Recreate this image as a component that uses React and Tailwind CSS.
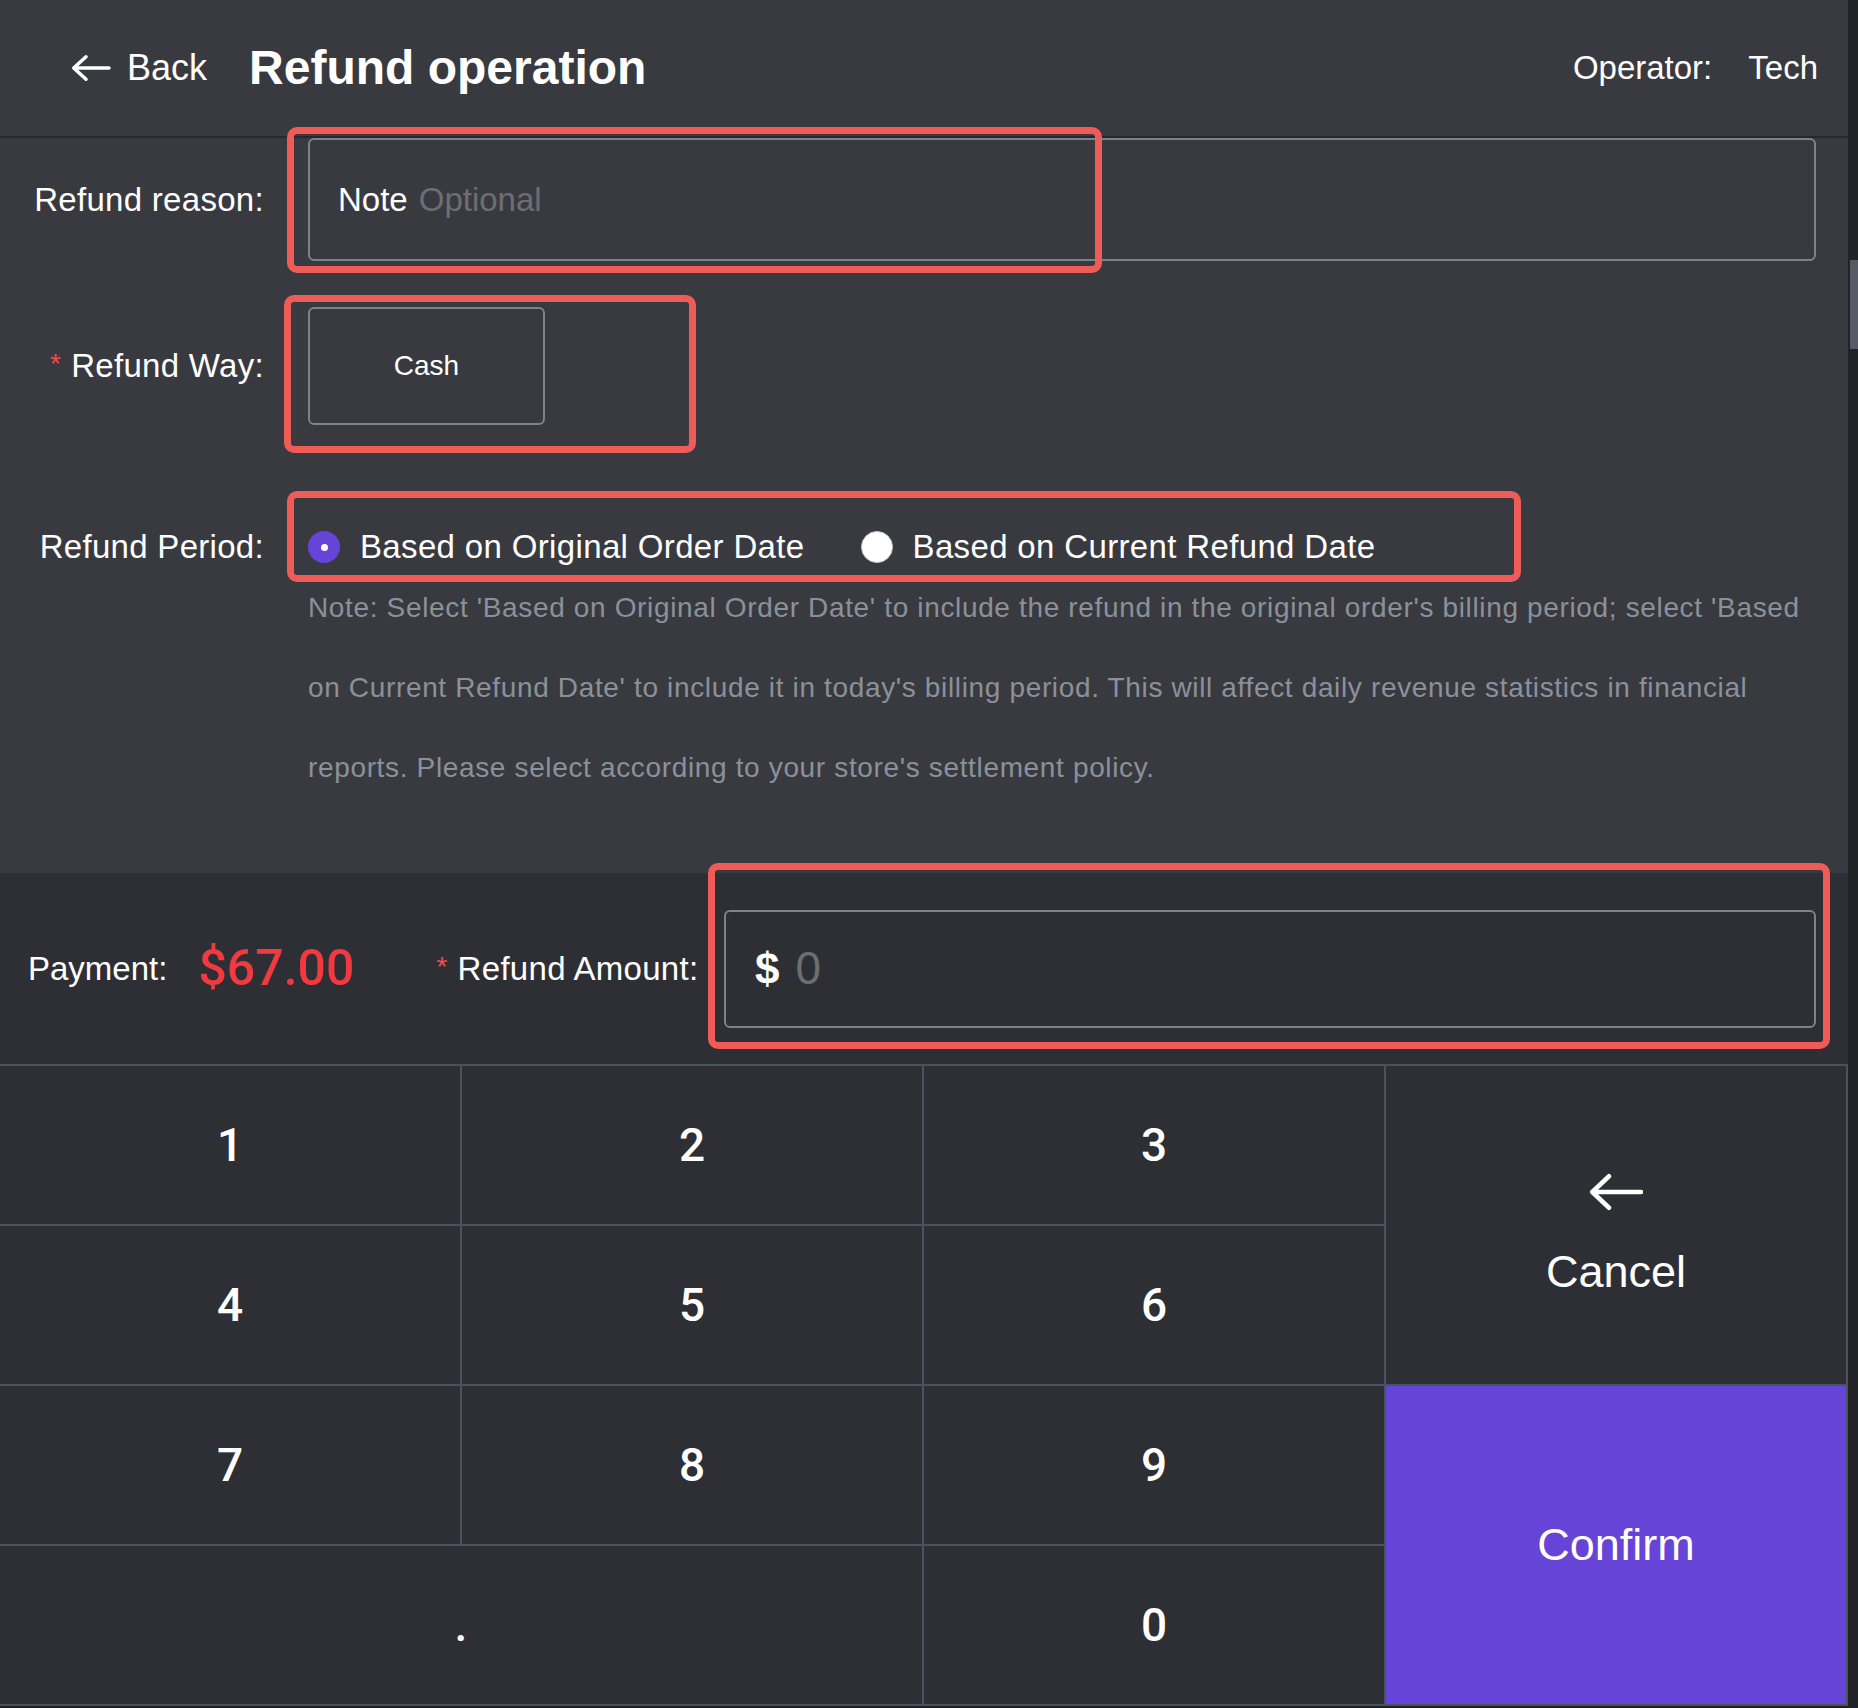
import React from "react";

// Left arrow used by the back link and the cancel key
function ArrowLeft({ w, h, stroke }) {
  return (
    <svg width={w} height={h} viewBox={`0 0 ${w} ${h}`} fill="none">
      <path
        d={`M${w - 2} ${h / 2} H${stroke} M${h / 2 + 1} ${stroke / 2 + 1} L${stroke / 2 + 1} ${h / 2} L${h / 2 + 1} ${h - stroke / 2 - 1}`}
        stroke="white"
        strokeWidth={stroke}
        strokeLinecap="round"
        strokeLinejoin="round"
      />
    </svg>
  );
}

// Highlight frame drawn over a field
function Mark({ className }) {
  return (
    <div
      className={`pointer-events-none absolute rounded-[10px] border-[7px] border-[#ef5b56] ${className}`}
    />
  );
}

function Key({ children, className = "" }) {
  return (
    <div
      className={`flex items-center justify-center bg-[#2e2f35] text-white text-[46px] font-medium font-['Roboto','Liberation_Sans',sans-serif] ${className}`}
    >
      {children}
    </div>
  );
}

export default function App() {
  return (
    <div className="flex w-[1858px] h-[1708px] bg-[#1f2023] font-['Liberation_Sans',Arial,sans-serif] overflow-hidden">
      <div className="flex w-[1848px] flex-col">
        {/* Header */}
        <header className="flex h-[138px] items-center border-b-2 border-[#27282c] bg-[#393a40] pl-[71px] pr-[30px] text-white">
          <div className="flex items-center gap-[16px]">
            <ArrowLeft w={40} h={28} stroke={3.5} />
            <span className="text-[36px] font-medium">Back</span>
          </div>
          <h1 className="ml-[42px] text-[48px] font-bold leading-none">Refund operation</h1>
          <div className="ml-auto flex items-center text-[33px]">
            <span>Operator:</span>
            <span className="ml-[36px]">Tech</span>
          </div>
        </header>

        {/* Form */}
        <section className="flex flex-col bg-[#393a40] pb-[65px] text-white">
          {/* Refund reason */}
          <div className="flex h-[123px] items-center">
            <div className="w-[264px] text-right text-[33px] tracking-[0.3px]">Refund reason:</div>
            <div className="relative ml-[44px] h-full w-[1508px]">
              <div className="flex h-full items-center rounded-[6px] border-2 border-[#7c838f] pl-[28px] text-[33px]">
                <span>Note</span>
                <span className="ml-[11px] text-[#6d6e74]">Optional</span>
              </div>
              <Mark className="left-[-21px] top-[-11px] w-[815px] h-[146px]" />
            </div>
          </div>

          {/* Refund way */}
          <div className="mt-[46px] flex h-[118px] items-center">
            <div className="w-[264px] text-right text-[33px] tracking-[0.3px]">
              <span className="mr-[10px] align-[4px] text-[28px] text-[#ef4b4b]">*</span>
              Refund Way:
            </div>
            <div className="relative ml-[44px] h-full">
              <div className="flex h-full w-[237px] items-center justify-center rounded-[6px] border-2 border-[#7c838f] text-[28px]">
                Cash
              </div>
              <Mark className="left-[-24px] top-[-12px] w-[412px] h-[158px]" />
            </div>
          </div>

          {/* Refund period */}
          <div className="mt-[101px] flex h-[42px] items-center">
            <div className="w-[264px] text-right text-[33px] tracking-[0.3px]">Refund Period:</div>
            <div className="relative ml-[44px] flex h-full items-center text-[33px] tracking-[0.35px]">
              <span className="flex h-[32px] w-[32px] items-center justify-center rounded-full bg-[#6644d8]">
                <span className="h-[7px] w-[7px] rounded-full bg-white" />
              </span>
              <span className="ml-[20px]">Based on Original Order Date</span>
              <span className="ml-[56px] h-[32px] w-[32px] rounded-full border border-[#c8c8cc] bg-white" />
              <span className="ml-[20px]">Based on Current Refund Date</span>
              <Mark className="left-[-21px] top-[-35px] w-[1234px] h-[91px]" />
            </div>
          </div>

          <p className="ml-[308px] w-[1512px] text-[28px] tracking-[0.65px] leading-[80px] text-[#8b919b]">
            Note: Select 'Based on Original Order Date' to include the refund in the original order's billing period; select 'Based on Current Refund Date' to include it in today's billing period. This will affect daily revenue statistics in financial reports. Please select according to your store's settlement policy.
          </p>
        </section>

        {/* Amount */}
        <section className="flex h-[191px] items-center bg-[#2e2f35] pl-[28px] pr-[32px] text-white">
          <span className="text-[33px]">Payment:</span>
          <span className="ml-[31px] text-[50px] font-medium text-[#f03a40] font-['Roboto','Liberation_Sans',sans-serif]">$67.00</span>
          <span className="ml-[82px] text-[33px] tracking-[0.3px]">
            <span className="mr-[10px] align-[4px] text-[28px] text-[#ef4b4b]">*</span>
            Refund Amount:
          </span>
          <div className="relative ml-auto h-[118px] w-[1092px]">
            <div className="flex h-full items-center rounded-[6px] border-2 border-[#7c838f] pl-[29px]">
              <span className="text-[44px] font-bold">$</span>
              <span className="ml-[16px] text-[46px] text-[#6d6e74]">0</span>
            </div>
            <Mark className="left-[-16px] top-[-47px] w-[1122px] h-[186px]" />
          </div>
        </section>

        {/* Keypad */}
        <div className="grid grid-cols-4 grid-rows-[repeat(4,158px)] gap-[2px] border-y-2 border-r-2 border-[#4a5160] bg-[#4a5160]">
          <Key>1</Key>
          <Key>2</Key>
          <Key>3</Key>
          <div className="row-span-2 flex flex-col items-center justify-center gap-[38px] bg-[#2e2f35] pt-[16px] text-white">
            <ArrowLeft w={54} h={38} stroke={4.5} />
            <span className="text-[45px] leading-none">Cancel</span>
          </div>
          <Key>4</Key>
          <Key>5</Key>
          <Key>6</Key>
          <Key>7</Key>
          <Key>8</Key>
          <Key>9</Key>
          <div className="row-span-2 flex items-center justify-center bg-[#6644d8] text-[45px] text-white">
            Confirm
          </div>
          <Key className="col-span-2">.</Key>
          <Key>0</Key>
        </div>
      </div>

      {/* Scroll track */}
      <div className="flex w-[10px] flex-col bg-[#222327] pl-[2px]">
        <div className="mt-[260px] h-[89px] w-[8px] bg-[#565a66]" />
      </div>
    </div>
  );
}
